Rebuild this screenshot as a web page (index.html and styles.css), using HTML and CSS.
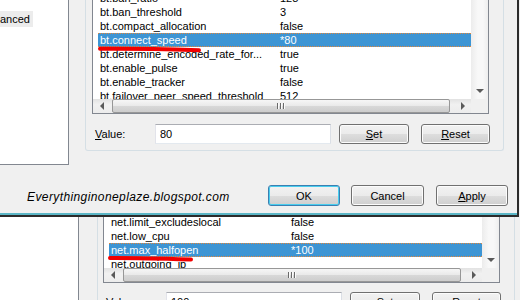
FILE: index.html
```html
<!DOCTYPE html>
<html lang="en">
<head>
  <meta charset="UTF-8" />
  <title>Advanced Settings</title>
  <link rel="stylesheet" href="styles.css">
</head>
<body>

  <!-- ── First capture: bt.connect_speed ───────────────────────── -->
  <div class="dialog">
    <div class="dlg-main">
      <div class="tree"><span class="tree-sel">anced</span></div>

      <div class="group">
        <div class="list">
          <div class="list-body tall">
            <div class="rows first-cut">
              <div class="row"><span class="name">bt.ban_ratio</span><span class="val">128</span></div>
              <div class="row"><span class="name">bt.ban_threshold</span><span class="val">3</span></div>
              <div class="row"><span class="name">bt.compact_allocation</span><span class="val">false</span></div>
              <div class="row sel"><span class="name">bt.connect_speed</span><span class="val">*80</span></div>
              <div class="row"><span class="name">bt.determine_encoded_rate_for...</span><span class="val">true</span></div>
              <div class="row"><span class="name">bt.enable_pulse</span><span class="val">true</span></div>
              <div class="row"><span class="name">bt.enable_tracker</span><span class="val">false</span></div>
              <div class="row"><span class="name">bt.failover_peer_speed_threshold</span><span class="val">512</span></div>
            </div>
            <div class="vscroll"><span class="sbtn"><i class="arr-down"></i></span></div>
          </div>
          <div class="hscroll">
            <span class="sbtn lbtn"><i class="arr-left"></i></span>
            <span class="thumb"><i class="grip"></i></span>
            <span class="track-gap"></span>
            <span class="sbtn"><i class="arr-right"></i></span>
            <span class="corner"></span>
          </div>
        </div>

        <div class="value-row">
          <label class="value-label"><u>V</u>alue:</label>
          <div class="value-input">80</div>
          <button class="btn btn-set"><u>S</u>et</button>
          <button class="btn btn-reset"><u>R</u>eset</button>
        </div>
      </div>
    </div>

    <div class="dlg-foot">
      <span class="brand">Everythinginoneplaze.blogspot.com</span>
      <div class="buttons">
        <button class="btn btn-ok">OK</button>
        <button class="btn btn-cancel">Cancel</button>
        <button class="btn btn-apply"><u>A</u>pply</button>
      </div>
    </div>

    <svg class="mark mark-top" width="110" height="10" viewBox="0 0 110 10">
      <path d="M4 4.8 C 30 4.6, 70 5.2, 103 6.2" />
    </svg>
  </div>

  <!-- ── Second capture: net.max_halfopen ───────────────────────── -->
  <div class="shot2">
    <div class="tree tree2"></div>

    <div class="group group2">
      <div class="list">
        <div class="list-body short">
          <div class="rows second-cut">
            <div class="row"><span class="name">net.limit_excludeslocal</span><span class="val">false</span></div>
            <div class="row"><span class="name">net.low_cpu</span><span class="val">false</span></div>
            <div class="row sel"><span class="name">net.max_halfopen</span><span class="val">*100</span></div>
            <div class="row"><span class="name">net.outgoing_ip</span><span class="val"></span></div>
          </div>
          <div class="vscroll"><span class="sbtn"><i class="arr-down"></i></span></div>
        </div>
        <div class="hscroll">
          <span class="sbtn lbtn"><i class="arr-left"></i></span>
          <span class="thumb"><i class="grip"></i></span>
          <span class="track-gap"></span>
          <span class="sbtn"><i class="arr-right"></i></span>
          <span class="corner"></span>
        </div>
      </div>

      <div class="value-row value-row2">
        <label class="value-label"><u>V</u>alue:</label>
        <div class="value-input">100</div>
        <button class="btn btn-set"><u>S</u>et</button>
        <button class="btn btn-reset"><u>R</u>eset</button>
      </div>
    </div>

    <svg class="mark mark-bottom" width="90" height="10" viewBox="0 0 90 10">
      <path d="M4 5 C 25 4.8, 55 5.6, 85 6.5" />
    </svg>
  </div>

</body>
</html>
```

FILE: styles.css
```css
* {
  box-sizing: border-box;
}
body {
  margin: 0;
  width: 520px;
  height: 300px;
  overflow: hidden;
  background: #f0f0f0;
  font-family: "Liberation Sans", Arial, sans-serif;
  font-size: 11px;
  color: #000;
}
u {
  text-decoration: underline;
  text-underline-offset: 1px;
}

/* ── dialog frame ─────────────────────────────── */
.dialog {
  position: relative;
  width: 519px;
  height: 217px;
  background: #f0f0f0;
  border-right: 2px solid #2b2b2b;
  border-bottom: 2px solid #2b2b2b;
}
.dlg-main {
  display: flex;
  align-items: flex-start;
  height: 165px;
}
.tree {
  width: 69px;
  height: 165px;
  padding-top: 11px;
  background: #fff;
  border-right: 1px solid #828790;
  border-bottom: 1px solid #828790;
}
.tree-sel {
  display: block;
  width: 33px;
  height: 16px;
  line-height: 16px;
  background: #ececec;
}

/* ── group box ────────────────────────────────── */
.group {
  width: 419px;
  height: 151px;
  margin-left: 16px;
  padding-left: 6px;
  border: 1px solid #d5dfe5;
  border-top: 0;
  border-radius: 0 0 3px 3px;
}

/* ── list view ────────────────────────────────── */
.list {
  width: 397px;
  background: #fff;
  border: 1px solid #828790;
  border-top: 0;
}
.list-body {
  display: flex;
}
.list-body.tall {
  height: 99px;
}
.list-body.short {
  height: 51px;
}
.rows {
  flex: 1;
  overflow: hidden;
  padding-left: 5px;
}
.first-cut .row:first-child {
  margin-top: -9px;
}
.second-cut .row:first-child {
  margin-top: -2px;
}
.row {
  display: flex;
  height: 14px;
  line-height: 14px;
  white-space: nowrap;
}
.row .name {
  width: 182px;
  padding-left: 2px;
  overflow: hidden;
}
.row .val {
  flex: 1;
}
.row.sel {
  background: #3d95d4;
  color: #fff;
  line-height: 12px;
  border-top: 1px dotted #e0873e;
  border-bottom: 1px dotted #e0873e;
}

/* ── scroll bars ──────────────────────────────── */
.vscroll {
  width: 17px;
  display: flex;
  flex-direction: column;
  justify-content: flex-end;
  background: linear-gradient(to right, #ececec, #f8f8f8 40%, #f8f8f8 70%, #eeeeee);
}
.sbtn {
  width: 17px;
  height: 17px;
  display: flex;
  align-items: center;
  justify-content: center;
}
.hscroll {
  display: flex;
  height: 14px;
  background: linear-gradient(#e2e2e2, #f1f1f1 40%, #ececec);
}
.hscroll .sbtn {
  height: 14px;
}
.hscroll .lbtn {
  width: 18px;
}
.arr-down {
  width: 0;
  height: 0;
  border-left: 4px solid transparent;
  border-right: 4px solid transparent;
  border-top: 4px solid #5a5a5a;
}
.arr-left {
  width: 0;
  height: 0;
  border-top: 4px solid transparent;
  border-bottom: 4px solid transparent;
  border-right: 4px solid #5a5a5a;
}
.arr-right {
  width: 0;
  height: 0;
  border-top: 4px solid transparent;
  border-bottom: 4px solid transparent;
  border-left: 4px solid #5a5a5a;
}
.thumb {
  width: 338px;
  margin-left: 1px;
  display: flex;
  align-items: center;
  justify-content: center;
  border: 1px solid #979797;
  border-radius: 2px;
  background: linear-gradient(#f6f6f6, #e9e9e9 50%, #d8d8d8 51%, #cdcdcd);
}
.grip {
  width: 8px;
  height: 6px;
  background: repeating-linear-gradient(90deg, #6a6a6a 0 1px, #fbfbfb 1px 2px, transparent 2px 3px);
}
.track-gap {
  width: 4px;
}
.corner {
  width: 17px;
  background: #f0f0f0;
}

/* ── value row ────────────────────────────────── */
.value-row {
  display: flex;
  align-items: center;
  height: 20px;
  margin-top: 10px;
}
.value-row2 {
  margin-top: 9px;
}
.value-label {
  width: 63px;
  padding-left: 3px;
}
.value-input {
  width: 176px;
  height: 20px;
  line-height: 18px;
  padding-left: 4px;
  background: #fff;
  border: 1px solid #abadb3;
  border-color: #abadb3 #dbdfe6 #e3e9ef #e2e3ea;
}

/* ── buttons ──────────────────────────────────── */
.btn {
  height: 20px;
  padding: 0;
  font-family: inherit;
  font-size: 11px;
  color: #000;
  border: 1px solid #707070;
  border-radius: 3px;
  background: linear-gradient(#f2f2f2, #ebebeb 50%, #dddddd 51%, #cfcfcf);
  box-shadow: inset 0 0 0 1px #fcfcfc;
}
.btn-set {
  width: 70px;
  margin-left: 8px;
}
.btn-reset {
  width: 69px;
  margin-left: 12px;
}

/* ── footer ───────────────────────────────────── */
.dlg-foot {
  display: flex;
  align-items: flex-start;
  height: 50px;
  padding-top: 20px;
  border-bottom: 2px solid #5bb6c6;
}
.brand {
  margin-left: 27px;
  padding-top: 3px;
  font-style: italic;
  font-size: 12px;
  letter-spacing: 0.4px;
  line-height: 18px;
}
.buttons {
  display: flex;
  margin-left: auto;
  margin-right: 9px;
}
.buttons .btn {
  height: 21px;
}
.btn-ok {
  width: 72px;
  border-color: #3c7fb1;
  box-shadow: inset 0 0 0 1px #48cdee;
}
.btn-cancel {
  width: 73px;
  margin-left: 11px;
}
.btn-apply {
  width: 72px;
  margin-left: 12px;
}

/* ── second capture ───────────────────────────── */
.shot2 {
  position: relative;
  display: flex;
  height: 83px;
}
.tree2 {
  width: 79px;
  height: 83px;
  border-bottom: 0;
}
.group2 {
  width: 418px;
  height: 83px;
  margin-left: 18px;
  padding-left: 5px;
  border-bottom: 0;
  border-radius: 0;
}

/* ── red pen marks ────────────────────────────── */
.mark {
  position: absolute;
}
.mark path {
  fill: none;
  stroke: #f20000;
  stroke-width: 4;
  stroke-linecap: round;
}
.mark-top {
  left: 96px;
  top: 44px;
}
.mark-bottom {
  left: 106px;
  top: 36px;
}
```
